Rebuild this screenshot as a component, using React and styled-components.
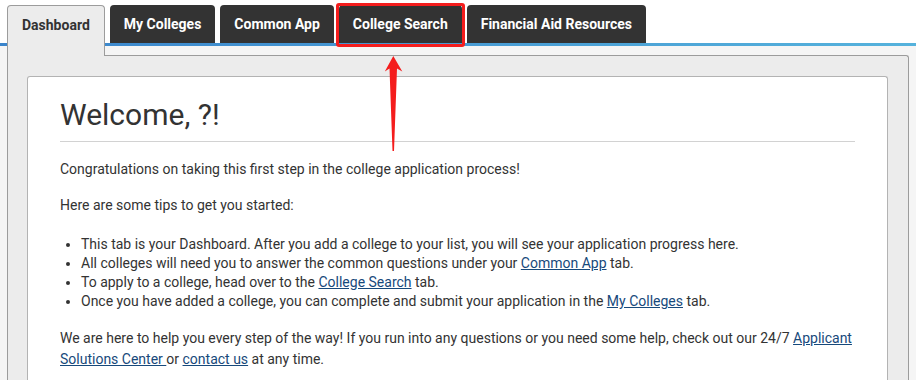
import React from 'react';
import styled, { createGlobalStyle } from 'styled-components';

const Global = createGlobalStyle`
  html, body { margin: 0; padding: 0; background: #f5f5f5; }
  body { font-family: Roboto, "Noto Sans", Arial, sans-serif; color: #333; }
  * { box-sizing: border-box; }
`;

const Page = styled.div`
  position: relative;
  min-height: 380px;
  overflow: hidden;
`;

const TabBar = styled.nav`
  display: flex;
  align-items: flex-start;
  gap: 5px;
  height: 46px;
  padding: 5px 7px 3px;
  background: linear-gradient(to right, #3a84cb, #55b2dc) left bottom / 100% 3px no-repeat, #fff;
`;

const Tab = styled.div`
  position: relative;
  display: flex;
  align-items: ${p => (p.$active ? 'flex-start' : 'center')};
  height: ${p => (p.$active ? '51px' : '38px')};
  padding: ${p => (p.$active ? '11px 14px 0' : '0 14px')};
  border-radius: 4px 4px 0 0;
  font-size: 14px;
  font-weight: 700;
  line-height: 16px;
  white-space: nowrap;
  background: ${p => (p.$active ? '#ececec' : '#333')};
  color: ${p => (p.$active ? '#333' : '#fff')};
  border: ${p => (p.$active ? '1px solid #9c9c9c' : 'none')};
  border-bottom: none;
  z-index: ${p => (p.$active ? 2 : 1)};

  ${p =>
    p.$marked &&
    `
    &::after {
      content: '';
      position: absolute;
      top: -2px;
      left: -3px;
      right: -3px;
      bottom: -4px;
      border: 3px solid #f41d1d;
      border-radius: 3px;
    }
  `}
`;

const Panel = styled.section`
  margin: 9px 7px 0;
  padding: 20px 20px 0 19px;
  background: #ececec;
  border: 1px solid #9c9c9c;
  border-bottom: none;
  border-radius: 0 3px 0 0;
`;

const Card = styled.div`
  background: #fff;
  border: 1px solid #b3b3b3;
  border-bottom: none;
  border-radius: 3px 3px 0 0;
  padding: 21px 32px 40px;
`;

const Title = styled.h1`
  margin: 0 0 10px;
  font-size: 30px;
  font-weight: 400;
  line-height: 33px;
  color: #333;
`;

const Rule = styled.hr`
  border: 0;
  border-top: 1px solid #d2d2d2;
  margin: 0 0 17px;
`;

const Text = styled.p`
  margin: 0 0 ${p => p.$gap || 16}px;
  font-size: 14px;
  line-height: 21px;
`;

const Tips = styled.ul`
  margin: 0 0 17px;
  padding-left: 21px;
  font-size: 14px;
  line-height: 19px;
`;

const Link = styled.a`
  color: #17497b;
  text-decoration: underline;
`;

const Arrow = styled.svg`
  position: absolute;
  left: 380px;
  top: 50px;
  z-index: 3;
`;

export default function App() {
  return (
    <Page>
      <Global />
      <TabBar>
        <Tab $active>Dashboard</Tab>
        <Tab>My Colleges</Tab>
        <Tab>Common App</Tab>
        <Tab $marked>College Search</Tab>
        <Tab>Financial Aid Resources</Tab>
      </TabBar>
      <Panel>
        <Card>
          <Title>Welcome, ?!</Title>
          <Rule />
          <Text $gap={15}>Congratulations on taking this first step in the college application process!</Text>
          <Text $gap={19}>Here are some tips to get you started:</Text>
          <Tips>
            <li>This tab is your Dashboard. After you add a college to your list, you will see your application progress here.</li>
            <li>
              All colleges will need you to answer the common questions under your <Link href="#">Common App</Link> tab.
            </li>
            <li>
              To apply to a college, head over to the <Link href="#">College Search</Link> tab.
            </li>
            <li>
              Once you have added a college, you can complete and submit your application in the{' '}
              <Link href="#">My Colleges</Link> tab.
            </li>
          </Tips>
          <Text>
            We are here to help you every step of the way! If you run into any questions or you need some help, check
            out our 24/7 <Link href="#">Applicant Solutions Center </Link>or <Link href="#">contact us</Link> at any
            time.
          </Text>
        </Card>
      </Panel>
      <Arrow width="30" height="110" viewBox="380 50 30 110">
        <polygon
          points="393.3,56 402.3,71.5 397,68.5 394,151 392.5,151 389.5,68.5 384.8,71.5"
          fill="#f41d1d"
        />
      </Arrow>
    </Page>
  );
}
